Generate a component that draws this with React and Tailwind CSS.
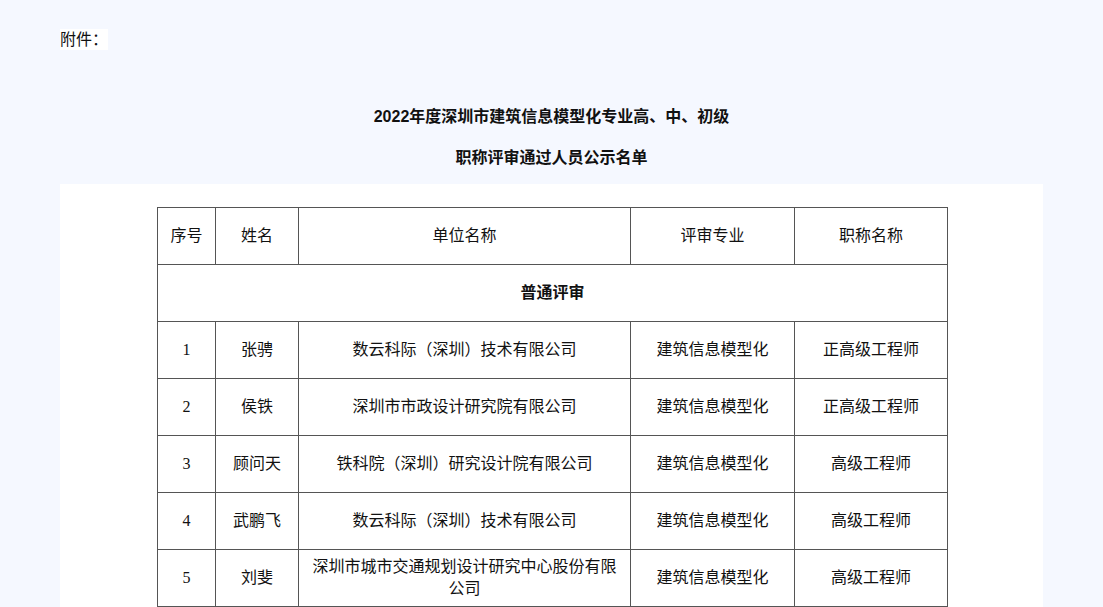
import React from 'react';

const rows = [
  ['1', '张骋', '数云科际（深圳）技术有限公司', '建筑信息模型化', '正高级工程师'],
  ['2', '侯铁', '深圳市市政设计研究院有限公司', '建筑信息模型化', '正高级工程师'],
  ['3', '顾问天', '铁科院（深圳）研究设计院有限公司', '建筑信息模型化', '高级工程师'],
  ['4', '武鹏飞', '数云科际（深圳）技术有限公司', '建筑信息模型化', '高级工程师'],
  ['5', '刘斐', '深圳市城市交通规划设计研究中心股份有限公司', '建筑信息模型化', '高级工程师'],
];

const cell = 'border border-[#555] text-center align-middle px-2 leading-[22px]';

export default function App() {
  return (
    <div className="min-h-[607px] bg-[#f5f8ff] text-[#111] overflow-hidden" style={{ fontFamily: '"Liberation Sans", "Noto Sans CJK SC", sans-serif' }}>
      <div className="pt-[28px] pl-[60px]">
        <span className="inline-block bg-white text-[16px] leading-[21px]">附件：</span>
      </div>
      <div className="text-center font-bold text-[16px] mt-[54px] leading-[21px]">2022年度深圳市建筑信息模型化专业高、中、初级</div>
      <div className="text-center font-bold text-[16px] mt-[20px] leading-[21px]">职称评审通过人员公示名单</div>
      <div className="mx-[60px] w-[983px] bg-white mt-[16px] pt-[23px] h-[500px]">
        <table className="ml-[97px] border-collapse text-[16px]" style={{ fontFamily: '"Liberation Serif", "Noto Sans CJK SC", serif' }}>
          <colgroup>
            <col className="w-[58px]" />
            <col className="w-[83px]" />
            <col className="w-[332px]" />
            <col className="w-[164px]" />
            <col className="w-[153px]" />
          </colgroup>
          <tbody>
            <tr className="h-[57px]">
              {['序号', '姓名', '单位名称', '评审专业', '职称名称'].map((h) => (
                <td key={h} className={cell}>{h}</td>
              ))}
            </tr>
            <tr className="h-[57px]">
              <td colSpan={5} className={cell + ' font-bold'}>普通评审</td>
            </tr>
            {rows.map((r) => (
              <tr key={r[0]} className="h-[57px]">
                {r.map((c, i) => (
                  <td key={i} className={cell}>{c}</td>
                ))}
              </tr>
            ))}
          </tbody>
        </table>
      </div>
    </div>
  );
}
